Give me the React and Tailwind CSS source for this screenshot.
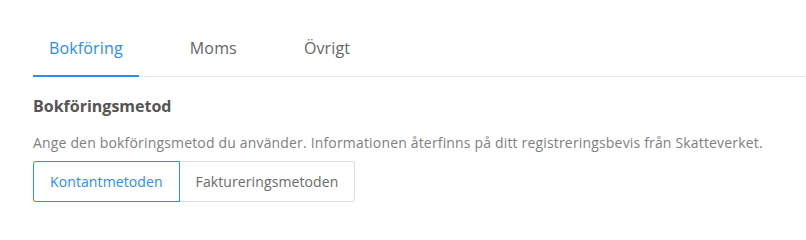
export default function App() {
  const tabs = ['Bokföring', 'Moms', 'Övrigt'];
  const active = 0;

  return (
    <div className="min-h-[238px] bg-white pl-[33px] pt-[37px] font-['Open_Sans',sans-serif]">
      <div className="flex border-b border-[#e8eaec]">
        {tabs.map((tab, i) => (
          <div
            key={tab}
            className={`-mb-px mr-[35px] px-4 pb-[16px] text-[16px] leading-[22px] border-b-2 tracking-[0.15px] ${
              i === active ? 'border-[#2d8cf0] text-[#2d8cf0]' : 'border-transparent text-[#666]'
            }`}
          >
            {tab}
          </div>
        ))}
      </div>

      <h2 className="mt-[18px] text-[16px] font-bold leading-[22px] text-[#555]">Bokföringsmetod</h2>
      <p className="mt-[16px] text-[14px] leading-[19px] tracking-[0.17px] text-[#808080]">
        Ange den bokföringsmetod du använder. Informationen återfinns på ditt registreringsbevis från Skatteverket.
      </p>

      <div className="mt-[9px] flex">
        <button className="h-[41px] rounded-l-[3px] border border-[#2d8cf0] px-4 text-[14px] tracking-[0.1px] text-[#2d8cf0]">
          Kontantmetoden
        </button>
        <button className="h-[41px] rounded-r-[3px] border border-l-0 border-[#dcdee2] px-4 text-[14px] tracking-[0.1px] text-[#6b6b6b]">
          Faktureringsmetoden
        </button>
      </div>
    </div>
  );
}
